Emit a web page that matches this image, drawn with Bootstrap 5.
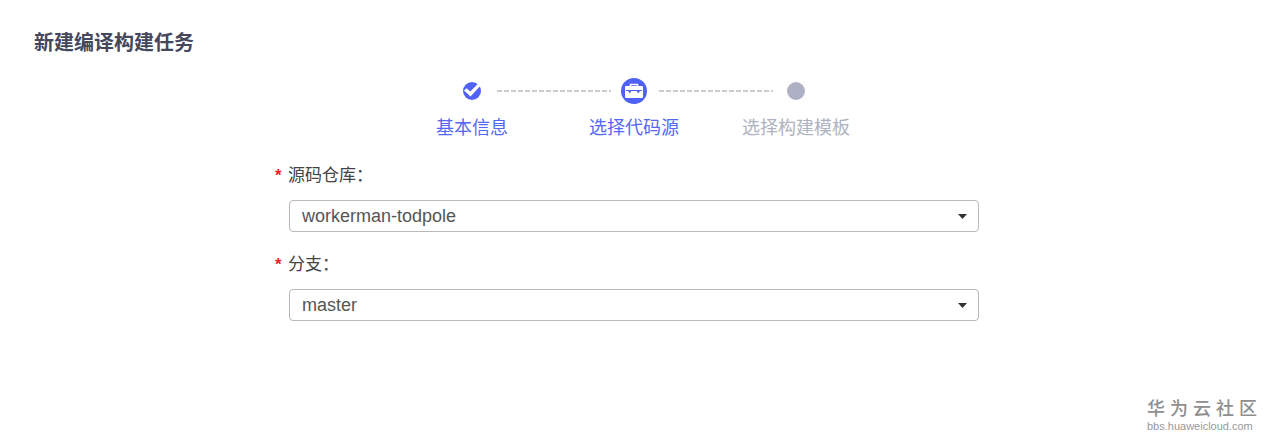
<!DOCTYPE html>
<html lang="zh-CN">
<head>
<meta charset="utf-8">
<meta name="viewport" content="width=device-width, initial-scale=1">
<title>新建编译构建任务</title>
<link href="https://cdn.jsdelivr.net/npm/bootstrap@5.3.0/dist/css/bootstrap.min.css" rel="stylesheet">
<style>
  body { font-family: "Liberation Sans", "Noto Sans CJK SC", sans-serif; font-size: 18px; line-height: 24px; color: #444; background: #fff; }
  main { padding-right: 1px; }
  .page-title { font-size: 20px; line-height: 28px; font-weight: 700; color: #45475c; padding: 29px 34px 0; }
  .stepper { max-width: 486px; margin-top: 19px; }
  .step { flex: 1 1 0; position: relative; color: #aeb3bf; }
  .step-active { color: #5468f2; }
  .step-icon { height: 30px; }
  .step + .step::before {
    content: ""; position: absolute; top: 14px; right: calc(50% + 23px); left: calc(-50% + 25px); height: 2px;
    background: repeating-linear-gradient(90deg, #ccc 0 5px, transparent 5px 7px);
  }
  .step-label { margin-top: 10px; }
  .source-form { max-width: 718px; margin-top: 24px; }
  .source-form label { font-size: 17px; margin-bottom: 12px; }
  .star { width: 13px; color: #f0202a; font-weight: 700; }
  .source-select {
    margin: 0 14px; width: calc(100% - 28px); height: 32px; padding: 0 36px 0 12px;
    font-size: 18px; line-height: 24px; color: #555; border: 1px solid #b8b8b8; border-radius: 4px;
    background-image: url("data:image/svg+xml,%3Csvg xmlns='http://www.w3.org/2000/svg' viewBox='0 0 9 5'%3E%3Cpath fill='%23333' d='M0 0h9L4.500 5z'/%3E%3C/svg%3E");
    background-size: 9px 5px; background-position: right 11px center;
  }
  .form-item + .form-item { margin-top: 21px; }
  .community { margin: 0 12px 7px; color: #8f8f8f; font-weight: 500; }
  .community-url { font-size: 11px; line-height: 10px; font-weight: 400; color: #999; }
</style>
</head>
<body class="d-flex flex-column min-vh-100">
  <h1 class="page-title mb-0">新建编译构建任务</h1>
  <main>
    <ol class="stepper list-unstyled d-flex mx-auto mb-0 text-center">
      <li class="step step-active">
        <div class="step-icon d-flex align-items-center justify-content-center">
          <svg width="18" height="18" viewBox="0 0 18 18" aria-hidden="true"><circle cx="9" cy="9" r="9" fill="#5062f5"/><path d="M1 8.500 3.500 6.300 7.300 9.500 14.800 2 17.200 4 7.500 14.500z" fill="#fff"/></svg>
        </div>
        <div class="step-label">基本信息</div>
      </li>
      <li class="step step-active" aria-current="step">
        <div class="step-icon d-flex align-items-center justify-content-center">
          <svg width="26" height="26" viewBox="0 0 26 26" aria-hidden="true"><circle cx="13" cy="13" r="13" fill="#5062f5"/><path d="M9.500 8.500V6.500h7v2" fill="none" stroke="#fff" stroke-width="1.500"/><rect x="4" y="8" width="18" height="12" rx="1" fill="#fff"/><path d="M5 12.500h16" stroke="#5062f5"/><path d="M6.500 12h4.500l-2.200 3.500zM15 12h4.500l-2.200 3.500z" fill="#5062f5"/></svg>
        </div>
        <div class="step-label">选择代码源</div>
      </li>
      <li class="step">
        <div class="step-icon d-flex align-items-center justify-content-center">
          <svg width="18" height="18" viewBox="0 0 18 18" aria-hidden="true"><circle cx="9" cy="9" r="9" fill="#adb1c3"/></svg>
        </div>
        <div class="step-label">选择构建模板</div>
      </li>
    </ol>
    <form class="source-form mx-auto">
      <div class="form-item">
        <label class="d-flex" for="repo"><span class="star">*</span>源码仓库：</label>
        <select class="form-select source-select" id="repo"><option>workerman-todpole</option></select>
      </div>
      <div class="form-item">
        <label class="d-flex" for="branch"><span class="star">*</span>分支：</label>
        <select class="form-select source-select" id="branch"><option>master</option></select>
      </div>
    </form>
  </main>
  <footer class="community mt-auto align-self-end">
    <div>华 为 云 社 区</div>
    <div class="community-url">bbs.huaweicloud.com</div>
  </footer>
  <script src="https://cdn.jsdelivr.net/npm/bootstrap@5.3.0/dist/js/bootstrap.bundle.min.js"></script>
</body>
</html>
